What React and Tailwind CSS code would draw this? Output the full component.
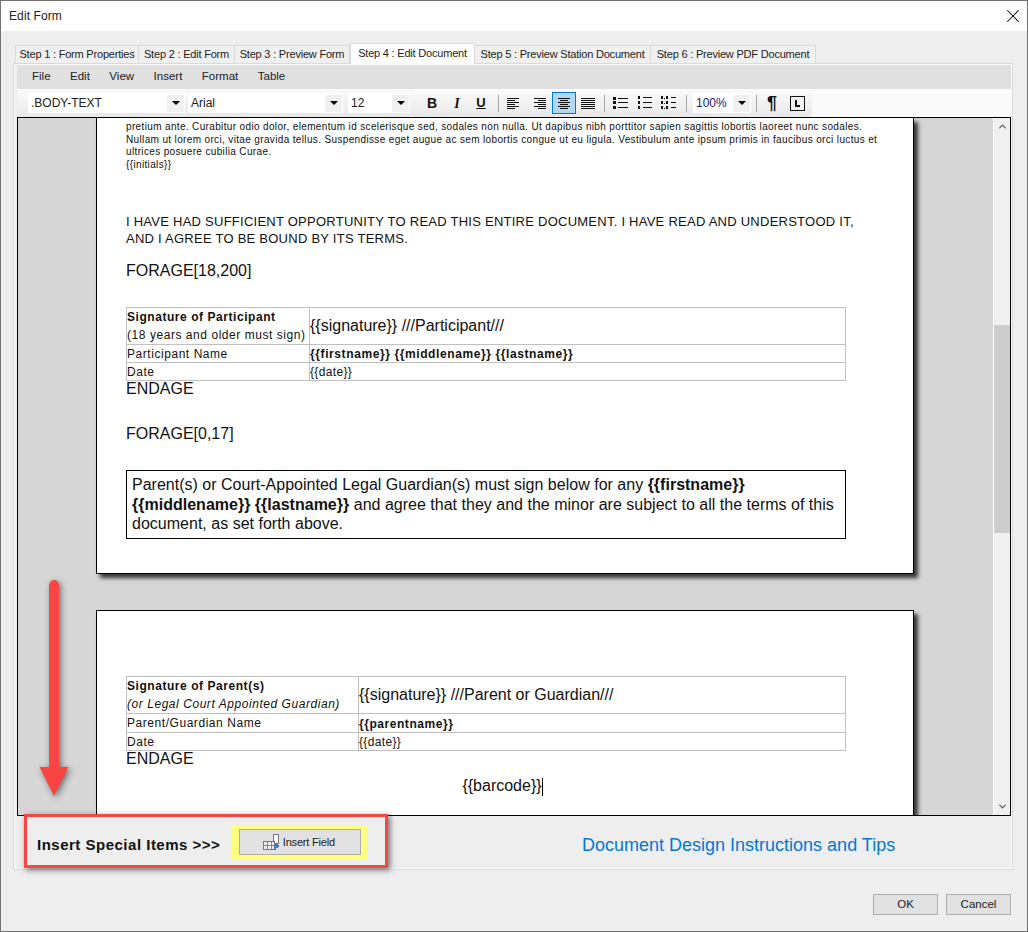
import { X, ChevronUp, ChevronDown } from 'lucide-react';

const ui = "font-['Liberation_Sans',Arial,sans-serif]";

function Lines({ rows, w = 14, h = 12 }) {
  return (
    <svg width={w} height={h} viewBox={`0 0 ${w} ${h}`} shapeRendering="crispEdges">
      {rows.map(([x1, x2, y]) => (
        <rect key={y} x={x1} y={y} width={x2 - x1} height="1" fill="#111" />
      ))}
    </svg>
  );
}

const alignLeft = [[1, 13, 1], [1, 9, 3], [1, 13, 5], [1, 9, 7], [1, 13, 9], [1, 9, 11]];
const alignRight = [[1, 13, 1], [5, 13, 3], [1, 13, 5], [5, 13, 7], [1, 13, 9], [5, 13, 11]];
const alignCenter = [[1, 13, 1], [3, 11, 3], [1, 13, 5], [3, 11, 7], [1, 13, 9], [3, 11, 11]];
const justify = [[0, 14, 1], [0, 14, 3], [0, 14, 5], [0, 14, 7], [0, 14, 9], [0, 14, 11]];

function Caret() {
  return (
    <span className="w-[17px] h-[17px] flex items-center justify-center bg-[#f0f0f0] shrink-0">
      <span className="w-0 h-0 border-x-[4px] border-x-transparent border-t-[4px] border-t-black" />
    </span>
  );
}

function Combo({ label, w, ml = 0 }) {
  return (
    <div style={{ width: w, marginLeft: ml }} className="h-[20px] bg-white flex items-center justify-between pr-[1px] shrink-0">
      <span className="pl-[3px] text-[12px] text-[#222]">{label}</span>
      <Caret />
    </div>
  );
}

function Sep() {
  return <span className="w-px h-[17px] bg-[#a8a8a8] shrink-0" />;
}

function Btn({ children, active }) {
  return (
    <span className={`w-[24px] h-[22px] flex items-center justify-center shrink-0 ${active ? 'bg-[#b3d7f3] border border-[#0078d7]' : ''}`}>
      {children}
    </span>
  );
}

function Bullets() {
  return (
    <svg width="16" height="12" viewBox="0 0 16 12" shapeRendering="crispEdges">
      {[0, 4, 9].map((y) => (
        <g key={y}>
          <rect x="0" y={y} width="3" height="3" fill="#111" />
          <rect x="5" y={y + 1} width="10" height="1" fill="#111" />
        </g>
      ))}
    </svg>
  );
}

function Numbers() {
  return (
    <svg width="16" height="14" viewBox="0 0 16 14" shapeRendering="crispEdges">
      {[0, 5, 10].map((y) => (
        <g key={y}>
          <rect x="1" y={y} width="2" height="3" fill="#111" />
          <rect x="6" y={y + 1} width="9" height="1" fill="#111" />
        </g>
      ))}
    </svg>
  );
}

function Outline() {
  return (
    <svg width="16" height="14" viewBox="0 0 16 14" shapeRendering="crispEdges">
      {[0, 5, 10].map((y) => (
        <g key={y}>
          <rect x="0" y={y} width="2" height="3" fill="#111" />
          <rect x="3" y={y + 2} width="1" height="1" fill="#111" />
          <rect x="5" y={y} width="2" height="3" fill="#111" />
          <rect x="10" y={y + 1} width="5" height="1" fill="#111" />
        </g>
      ))}
    </svg>
  );
}

function Toolbar() {
  return (
    <div className="h-[28px] bg-[#fafafa] flex">
      <div className="w-[795px] h-[28px] bg-gradient-to-b from-[#fbfbfb] to-[#e8e8e8] rounded-r-[3px] flex items-center pl-[11px]">
        <Combo label=".BODY-TEXT" w={157} />
        <Combo label="Arial" w={155} ml={3} />
        <Combo label="12" w={62} ml={5} />
        <span className="ml-[6px]"><Sep /></span>
        <span className="w-[4px]" />
        <Btn><span className="text-[14px] font-bold text-[#111]">B</span></Btn>
        <span className="w-[1px]" />
        <Btn><span className="text-[14px] font-bold italic font-['Liberation_Serif',serif] text-[#111]">I</span></Btn>
        <Btn><span className="text-[13px] font-bold underline text-[#111]">U</span></Btn>
        <span className="w-[5px]" />
        <Sep />
        <span className="w-[2px]" />
        <Btn><Lines rows={alignLeft} /></Btn>
        <span className="w-[3px]" />
        <Btn><Lines rows={alignRight} /></Btn>
        <Btn active><Lines rows={alignCenter} /></Btn>
        <Btn><Lines rows={justify} /></Btn>
        <span className="w-[4px]" />
        <Sep />
        <span className="w-[4px]" />
        <Btn><Bullets /></Btn>
        <Btn><Numbers /></Btn>
        <Btn><Outline /></Btn>
        <span className="w-[5px]" />
        <Sep />
        <span className="w-[6px]" />
        <div className="w-[58px] h-[20px] bg-white flex items-center justify-between pr-[1px] shrink-0">
          <span className="pl-[3px] text-[12px] text-[#1c1b6b]">100%</span>
          <Caret />
        </div>
        <span className="w-[5px]" />
        <Sep />
        <span className="w-[3px]" />
        <Btn><span className="text-[18px] font-bold text-[#111] leading-none">¶</span></Btn>
        <span className="w-[1px]" />
        <Btn>
          <svg width="15" height="15" viewBox="0 0 15 15" shapeRendering="crispEdges">
            <rect x="0.5" y="0.5" width="14" height="14" fill="#f4f4f4" stroke="#111" />
            <path d="M6 4v6h4" fill="none" stroke="#111" strokeWidth="2" />
          </svg>
        </Btn>
      </div>
    </div>
  );
}

function SigTable({ col, rows }) {
  return (
    <table className="w-[720px] border-collapse table-fixed">
      <colgroup>
        <col style={{ width: col }} />
        <col />
      </colgroup>
      <tbody>
        {rows.map((r) => (
          <tr key={r.h} style={{ height: r.h }}>
            <td className="border border-[#c0c0c0] p-0 align-middle text-[12px] leading-[16px] tracking-[0.55px] text-[#111] whitespace-nowrap">
              {r.left}
            </td>
            <td className="border border-[#c0c0c0] p-0 align-middle leading-[16px] whitespace-nowrap">{r.right}</td>
          </tr>
        ))}
      </tbody>
    </table>
  );
}

function Editor() {
  return (
    <div className="h-[699px] border border-black bg-[#d6d6d6] flex overflow-hidden">
      <div className="flex-1 min-w-0 border-r border-white overflow-hidden pl-[78px] font-['Liberation_Sans',Arial,sans-serif] text-[#111]">
        <div className="w-[818px] h-[456px] bg-white border-x border-b border-black shadow-[4px_4px_4px_rgba(0,0,0,0.75)] px-[29px] pt-[3px]">
          <p className="text-[10px] leading-[12.5px] tracking-[0.355px] whitespace-nowrap">
            pretium ante. Curabitur odio dolor, elementum id scelerisque sed, sodales non nulla. Ut dapibus nibh porttitor sapien sagittis lobortis laoreet nunc sodales.
            <br />
            Nullam ut lorem orci, vitae gravida tellus. Suspendisse eget augue ac sem lobortis congue ut eu ligula. Vestibulum ante ipsum primis in faucibus orci luctus et
            <br />
            ultrices posuere cubilia Curae.
            <br />
            {'{{initials}}'}
          </p>
          <p className="mt-[42px] text-[13px] leading-[17px] tracking-[0.25px] whitespace-nowrap">
            I HAVE HAD SUFFICIENT OPPORTUNITY TO READ THIS ENTIRE DOCUMENT. I HAVE READ AND UNDERSTOOD IT,
            <br />
            AND I AGREE TO BE BOUND BY ITS TERMS.
          </p>
          <p className="mt-[14px] text-[16px] leading-[19px]">FORAGE[18,200]</p>
          <div className="mt-[27px]">
            <SigTable
              col={183}
              rows={[
                {
                  h: 37,
                  left: (
                    <>
                      <b className="block">Signature of Participant</b>
                      <span className="block mt-[2px]">(18 years and older must sign)</span>
                    </>
                  ),
                  right: <span className="text-[16px]">{'{{signature}} ///Participant///'}</span>,
                },
                { h: 18, left: 'Participant Name', right: <b className="text-[12px] tracking-[0.6px]">{'{{firstname}} {{middlename}} {{lastname}}'}</b> },
                { h: 17, left: 'Date', right: <span className="text-[12px] tracking-[0.35px]">{'{{date}}'}</span> },
              ]}
            />
          </div>
          <p className="-mt-[2px] text-[16px] leading-[19px]">ENDAGE</p>
          <p className="mt-[26px] text-[16px] leading-[19px]">FORAGE[0,17]</p>
          <div className="mt-[27px] w-[720px] h-[69px] border border-black px-[5px] pt-[4px] text-[16px] leading-[19.5px] tracking-[0.01px]">
            Parent(s) or Court-Appointed Legal Guardian(s) must sign below for any <b>{'{{firstname}}'}</b>
            <br />
            <b>{'{{middlename}} {{lastname}}'}</b> and agree that they and the minor are subject to all the terms of this
            <br />
            document, as set forth above.
          </div>
        </div>
        <div className="mt-[36px] w-[818px] h-[400px] bg-white border border-black shadow-[4px_4px_4px_rgba(0,0,0,0.75)] px-[29px] pt-[65px]">
          <SigTable
            col={232}
            rows={[
              {
                h: 37,
                left: (
                  <>
                    <b className="block">Signature of Parent(s)</b>
                    <i className="block mt-[2px]">(or Legal Court Appointed Guardian)</i>
                  </>
                ),
                right: <span className="text-[16px]">{'{{signature}} ///Parent or Guardian///'}</span>,
              },
              { h: 19, left: 'Parent/Guardian Name', right: <b className="text-[12px] tracking-[0.55px]">{'{{parentname}}'}</b> },
              { h: 18, left: 'Date', right: <span className="text-[12px] tracking-[0.35px]">{'{{date}}'}</span> },
            ]}
          />
          <p className="-mt-[2px] text-[16px] leading-[19px]">ENDAGE</p>
          <div className="mt-[8px] text-center text-[16px] leading-[19px] pr-[5px]">
            {'{{barcode}}'}
            <span className="inline-block w-px h-[18px] bg-black align-middle" />
          </div>
        </div>
      </div>
      <div className="w-[16px] bg-[#f0f0f0] flex flex-col items-center shrink-0">
        <span className="h-[17px] flex items-center justify-center">
          <ChevronUp size={11} strokeWidth={3} className="text-[#606060]" />
        </span>
        <div className="mt-[190px] w-full h-[208px] bg-[#cdcdcd]" />
        <span className="mt-auto h-[17px] flex items-center justify-center">
          <ChevronDown size={11} strokeWidth={3} className="text-[#606060]" />
        </span>
      </div>
    </div>
  );
}

const tabs = [
  ['Step 1 : Form Properties', 124],
  ['Step 2 : Edit Form', 96],
  ['Step 3 : Preview Form', 115],
  ['Step 4 : Edit Document', 125],
  ['Step 5 : Preview Station Document', 176],
  ['Step 6 : Preview PDF Document', 165],
];

export default function App() {
  return (
    <div className={`relative w-[1028px] h-[932px] border border-[#707070] flex flex-col overflow-hidden bg-[#eeeeee] text-[#222] ${ui}`}>
      <div className="h-[30px] bg-white flex items-center justify-between pl-[8px] pr-[3px] shrink-0">
        <span className="text-[12px] tracking-[0.1px]">Edit Form</span>
        <X size={22} strokeWidth={1.1} className="text-[#111]" />
      </div>

      <div className="flex-1 pl-[12px] pr-[14px]">
        <div className="flex items-end pl-[2px] h-[32px] relative z-10">
          {tabs.map(([label, w], i) => (
            <div
              key={label}
              style={{ width: w }}
              className={
                i === 3
                  ? 'h-[21px] -mb-px bg-white border-x border-t border-[#d9d9d9] flex items-center justify-center text-[11px] tracking-[-0.2px] whitespace-nowrap pb-[2px]'
                  : 'h-[18px] bg-[#f0f0f0] border-t border-r border-[#d9d9d9] first:border-l flex items-center justify-center text-[11px] tracking-[-0.2px] whitespace-nowrap'
              }
            >
              {label}
            </div>
          ))}
        </div>

        <div className="h-[807px] border border-[#dadada] shadow-[inset_1px_1px_0_#fafafa,inset_-1px_-1px_0_#fafafa] pl-[3px] pr-[1px] pt-[1px]">
          <div className="h-[24px] bg-[#e0e0e0] flex items-center gap-[19.5px] pl-[15px] text-[11.5px]">
            <span>File</span>
            <span>Edit</span>
            <span>View</span>
            <span>Insert</span>
            <span>Format</span>
            <span>Table</span>
          </div>
          <Toolbar />
          <Editor />

          <div className="h-[52px] relative flex">
            <div className="ml-[7px] -mt-[2px] w-[364px] h-[54px] border-[3px] border-[#fb4444] shadow-[2px_2px_6px_rgba(0,0,0,0.55)] flex items-center pl-[10px] pt-[9px] z-10 bg-[#eeeeee]">
              <span className="text-[15px] font-bold text-[#111] tracking-[0.5px] whitespace-nowrap">{'Insert Special Items >>>'}</span>
              <div className="ml-[12px] w-[135px] h-[33px] bg-[#ffff7f] flex items-center justify-center -mt-[7px]">
                <div className="w-[122px] h-[26px] bg-[#e1e1e1] border border-[#adadad] flex items-center pl-[23px] gap-[3px]">
                  <svg width="17" height="17" viewBox="0 0 17 17" shapeRendering="crispEdges">
                    <rect x="10.5" y="0.5" width="5" height="9" fill="#fff" stroke="#777" />
                    <rect x="0.5" y="7.5" width="11" height="8" fill="#eee" stroke="#777" />
                    <path d="M4 8v7M8 8v7M1 11h10" stroke="#888" />
                    <path d="M12 16v-4h3M13 10l2 2-2 2" fill="none" stroke="#3f7cc0" strokeWidth="1.5" />
                  </svg>
                  <span className="text-[11px] tracking-[-0.2px]">Insert Field</span>
                </div>
              </div>
            </div>
            <a className="ml-[194px] mt-[17px] text-[18px] leading-[24px] text-[#0078d7] whitespace-nowrap">
              Document Design Instructions and Tips
            </a>
          </div>
        </div>

        <div className="flex justify-end gap-[8px] pt-[24px] pr-[2px]">
          <div className="w-[65px] h-[21px] bg-[#e1e1e1] border border-[#adadad] flex items-center justify-center text-[11.5px]">OK</div>
          <div className="w-[65px] h-[21px] bg-[#e1e1e1] border border-[#adadad] flex items-center justify-center text-[11.5px]">Cancel</div>
        </div>
      </div>

      <svg width="40" height="225" viewBox="0 0 40 225" className="absolute left-[33px] top-[576px] z-20 drop-shadow-[2px_2px_3px_rgba(0,0,0,0.5)]">
        <path d="M15 8a5 5 0 0 1 10 0v182h9.5L20 219 5.500 190H15z" fill="#fb4444" />
      </svg>
    </div>
  );
}
